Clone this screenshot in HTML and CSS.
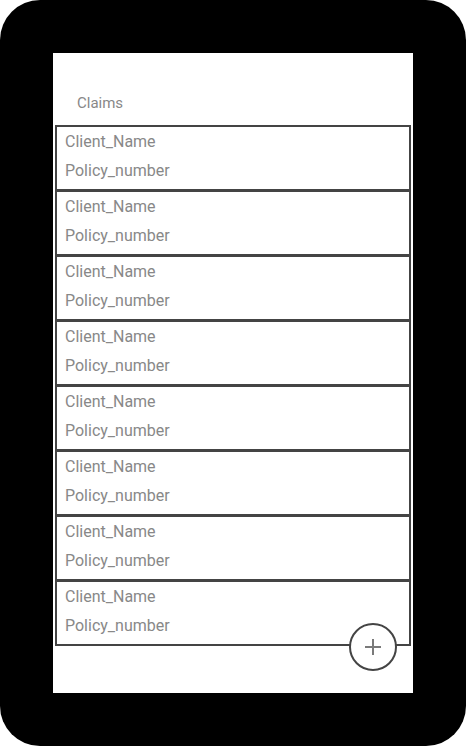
FILE: index.html
```html
<!DOCTYPE html>
<html lang="en">
<head>
    <meta charset="UTF-8">
    <meta name="viewport" content="width=device-width, initial-scale=1.0">
    <title>Claims</title>
    <link rel="stylesheet" href="styles.css">
</head>
<body>
    <div class="device">
        <div class="screen">
            <div class="header">Claims</div>

            <div class="claims">
                <div class="claim">
                    <div class="line">Client_Name</div>
                    <div class="line">Policy_number</div>
                </div>
                <div class="claim">
                    <div class="line">Client_Name</div>
                    <div class="line">Policy_number</div>
                </div>
                <div class="claim">
                    <div class="line">Client_Name</div>
                    <div class="line">Policy_number</div>
                </div>
                <div class="claim">
                    <div class="line">Client_Name</div>
                    <div class="line">Policy_number</div>
                </div>
                <div class="claim">
                    <div class="line">Client_Name</div>
                    <div class="line">Policy_number</div>
                </div>
                <div class="claim">
                    <div class="line">Client_Name</div>
                    <div class="line">Policy_number</div>
                </div>
                <div class="claim">
                    <div class="line">Client_Name</div>
                    <div class="line">Policy_number</div>
                </div>
                <div class="claim">
                    <div class="line">Client_Name</div>
                    <div class="line">Policy_number</div>
                </div>
            </div>

            <!-- add button sits over the last card -->
            <div class="fab">
                <svg width="18" height="18" viewBox="0 0 18 18">
                    <path d="M9 1 V17 M1 9 H17" stroke="#7a7a7a" stroke-width="2" fill="none"/>
                </svg>
            </div>
        </div>
    </div>
</body>
</html>
```

FILE: styles.css
```css
body {
    margin: 0;
    background-color: white;
    font-family: Roboto, "Liberation Sans", sans-serif;
}

.device {
    width: 466px;
    height: 746px;
    box-sizing: border-box;
    padding: 53px;
    background-color: black;
    border-radius: 40px;
}

.screen {
    position: relative;
    width: 360px;
    height: 640px;
    background-color: white;
}

.header {
    padding: 40px 0 0 24px;
    line-height: 20px;
    font-size: 15px;
    color: #888;
}

.claims {
    margin-top: 12px;
}

.claim {
    height: 66px;
    box-sizing: border-box;
    margin: 0 2px -1px 2px;
    padding: 0 8px;
    border: 2px solid #444;
}

.line {
    line-height: 29px;
    font-size: 16px;
    color: #888;
}

.fab {
    position: absolute;
    left: 296px;
    top: 570px;
    width: 48px;
    height: 48px;
    box-sizing: border-box;
    border: 2px solid #444;
    border-radius: 50%;
    background-color: white;
    display: flex;
    justify-content: center;
    align-items: center;
}
```
